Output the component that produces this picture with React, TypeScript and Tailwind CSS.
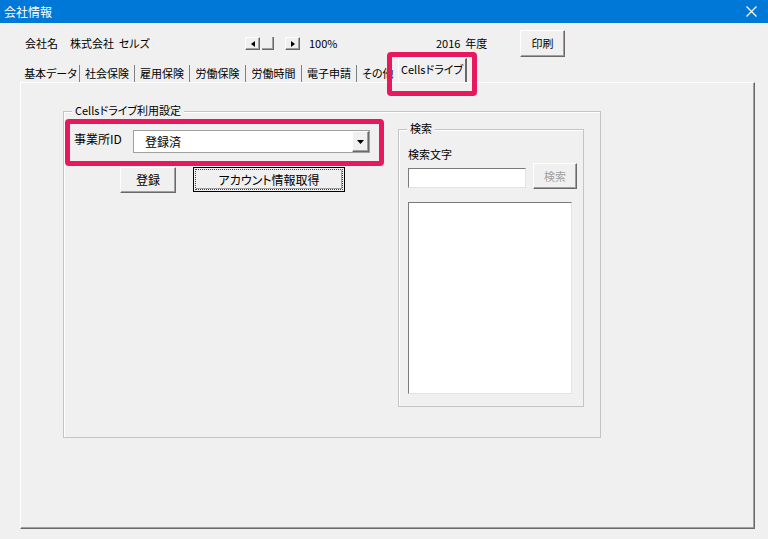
import React from "react";

const raised =
  "bg-[#f0f0f0] border border-t-white border-l-white border-r-[#696969] border-b-[#696969] shadow-[inset_-1px_-1px_0_#a0a0a0]";

function Tri({ dir }: { dir: "l" | "r" | "d" }) {
  if (dir === "d")
    return (
      <svg width="7" height="4" viewBox="0 0 7 4">
        <path d="M0 0 H7 L3.5 4 Z" fill="#000" />
      </svg>
    );
  return (
    <svg width="4" height="6" viewBox="0 0 4 6">
      {dir === "l" ? <path d="M4 0 V6 L0 3 Z" fill="#000" /> : <path d="M0 0 V6 L4 3 Z" fill="#000" />}
    </svg>
  );
}

export default function App() {
  const tabs: [string, number][] = [
    ["基本データ", 58],
    ["社会保険", 55],
    ["雇用保険", 55],
    ["労働保険", 56],
    ["労働時間", 56],
    ["電子申請", 55],
  ];
  return (
    <div className="relative w-[768px] h-[539px] overflow-hidden bg-[#f0f0f0] flex flex-col text-[11px] text-black font-['Noto_Sans_CJK_JP','Noto_Sans',sans-serif] [font-feature-settings:'palt'] leading-none">
      {/* title bar */}
      <div className="h-[23px] bg-[#0078d7] flex items-center justify-between pl-[4px] pr-[11px] text-white text-[12px]">
        <span>会社情報</span>
        <svg width="11" height="11" viewBox="0 0 11 11">
          <path d="M0.5 0.5 L10.5 10.5 M10.5 0.5 L0.5 10.5" stroke="#fff" strokeWidth="1.2" />
        </svg>
      </div>

      {/* header row */}
      <div className="mt-[7px] h-[27px] flex items-center pl-[25px] whitespace-nowrap">
        <span className="w-[45px]">会社名</span>
        <span className="w-[175px]">株式会社&nbsp;&nbsp;セルズ</span>
        <div className={`w-[15px] h-[13px] flex items-center justify-center ${raised}`}>
          <Tri dir="l" />
        </div>
        <div className="ml-[2px] w-[12px] h-[13px] border-r border-b border-[#696969] shadow-[inset_-1px_-1px_0_#a0a0a0]" />
        <div className={`ml-[11px] w-[15px] h-[13px] flex items-center justify-center ${raised}`}>
          <Tri dir="r" />
        </div>
        <span className="ml-[9px] w-[127px]">100%</span>
        <span className="w-[84px]">2016&nbsp;&nbsp;年度</span>
        <div className={`w-[45px] h-[27px] flex items-center justify-center ${raised}`}>印刷</div>
      </div>

      {/* tabs */}
      <div className="mt-[1px] h-[24px] flex items-end pl-[22px] whitespace-nowrap">
        {tabs.map(([t, w]) => (
          <div
            key={t}
            style={{ width: w }}
            className="h-[17px] flex items-center justify-center border-r border-[#808080]"
          >
            {t}
          </div>
        ))}
        <div className="w-[41px] h-[17px] pl-[5px] flex items-center overflow-hidden">
          その他
        </div>
        <div className="w-[69px] h-[24px] flex items-center justify-center border-t border-l border-white border-r-2 border-r-[#696969] pb-[3px]">
          Cellsドライブ
        </div>
      </div>

      {/* tab panel */}
      <div className="ml-[20px] w-[735px] h-[447px] border-t border-l border-white border-r border-b border-r-[#696969] border-b-[#696969] shadow-[inset_-1px_-1px_0_#a0a0a0]">
        <div className="relative ml-[42px] mt-[28px] w-[538px] h-[327px] border border-[#c4c4c4] shadow-[inset_1px_1px_0_#fff] flex items-start pl-[10px]">
          <span className="absolute left-[8px] -top-[7px] px-[3px] bg-[#f0f0f0] whitespace-nowrap">Cellsドライブ利用設定</span>

          {/* left column */}
          <div className="w-[296px] mt-[18px] flex flex-col">
            <div className="flex items-start">
              <span className="w-[59px] pt-[3px] text-[12px]">事業所ID</span>
              <div className="w-[237px] h-[23px] bg-white border border-[#a0a0a0] flex items-center">
                <span className="flex-1 pl-[11px] text-[12px]">登録済</span>
                <div className={`w-[17px] h-[21px] flex items-center justify-center ${raised}`}>
                  <Tri dir="d" />
                </div>
              </div>
            </div>
            <div className="mt-[14px] flex items-start">
              <div className={`ml-[46px] w-[56px] h-[26px] flex items-center justify-center text-[12px] ${raised}`}>登録</div>
              <div className="ml-[17px] w-[152px] h-[25px] border border-black bg-[#f0f0f0] p-[1px]">
                <div className="w-full h-full border border-dotted border-[#404040] flex items-center justify-center shadow-[inset_-1px_-1px_0_#a0a0a0] text-[12px]">
                  アカウント情報取得
                </div>
              </div>
            </div>
          </div>

          {/* search group */}
          <div className="relative ml-[28px] mt-[17px] w-[186px] h-[278px] border border-[#c4c4c4] shadow-[inset_1px_1px_0_#fff] pl-[9px] flex flex-col">
            <span className="absolute left-[8px] -top-[7px] px-[3px] bg-[#f0f0f0]">検索</span>
            <span className="mt-[17px] h-[14px] leading-[14px]">検索文字</span>
            <div className="mt-[2px] flex items-start">
              <div className="mt-[5px] w-[118px] h-[20px] bg-white border border-t-[#7a7a7a] border-l-[#7a7a7a] border-r-[#e3e3e3] border-b-[#e3e3e3]" />
              <div className={`ml-[7px] w-[44px] h-[26px] flex items-center justify-center text-[#a0a0a0] ${raised}`}>検索</div>
            </div>
            <div className="mt-[13px] w-[164px] h-[192px] bg-white border border-t-[#7a7a7a] border-l-[#7a7a7a] border-r-[#e3e3e3] border-b-[#e3e3e3]" />
          </div>
        </div>
      </div>

      {/* red highlight overlays */}
      <div className="absolute left-[387px] top-[52px] w-[90px] h-[44px] border-[5px] border-[#e8185e] rounded-[4px]" />
      <div className="absolute left-[65px] top-[119px] w-[319px] h-[47px] border-[5px] border-[#e8185e] rounded-[4px]" />
    </div>
  );
}
